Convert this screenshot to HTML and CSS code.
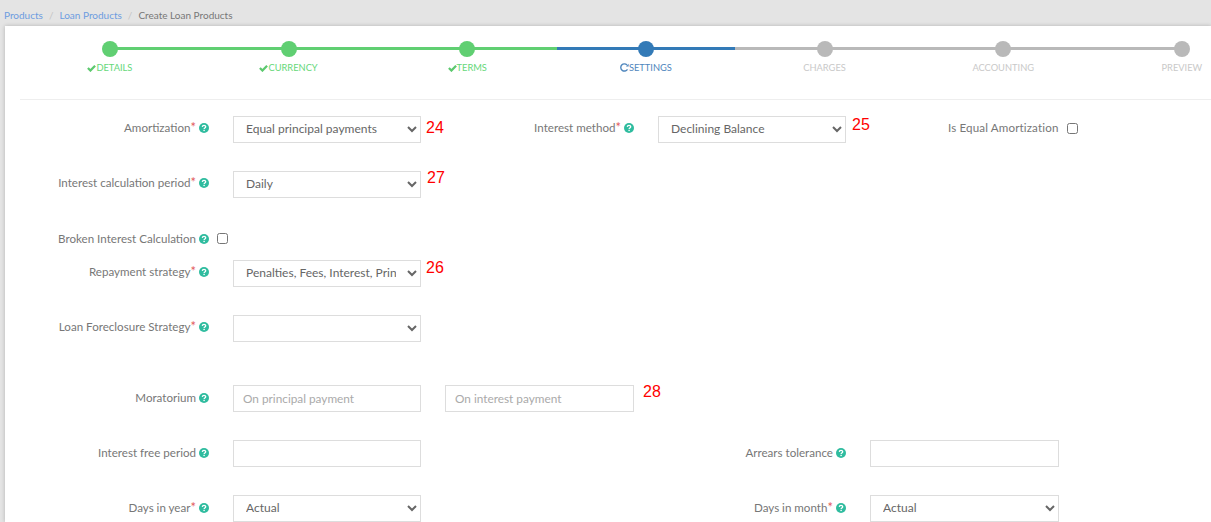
FILE: index.html
```html
<!DOCTYPE html>
<html lang="en">
<head>
<meta charset="utf-8">
<title>Create Loan Products</title>
<link rel="stylesheet" href="styles.css">
</head>
<body>
<svg class="defs" width="0" height="0" aria-hidden="true">
  <symbol id="help" viewBox="0 0 10 10">
    <circle cx="5" cy="5" r="5" fill="#2fbc9f"/>
    <path d="M3.3 3.9C3.4 2.9 4.1 2.4 5 2.4c1 0 1.7.6 1.7 1.4 0 1.3-1.6 1.2-1.6 2.3" fill="none" stroke="#fff" stroke-width="1.3"/>
    <rect x="4.4" y="6.8" width="1.4" height="1.3" fill="#fff"/>
  </symbol>
  <symbol id="ok" viewBox="0 0 10 8">
    <path d="M1 4l2.8 2.8L9 1.4" fill="none" stroke="currentColor" stroke-width="2.5"/>
  </symbol>
  <symbol id="refresh" viewBox="0 0 10 10">
    <path d="M8.3 7A4 4 0 1 1 7.8 2.2" fill="none" stroke="currentColor" stroke-width="1.5"/>
    <path d="M6.6 3.8H9.6V.8z" fill="currentColor"/>
  </symbol>
</svg>

<nav class="crumbs">
  <a href="#">Products</a><span class="sep">/</span><a href="#">Loan Products</a><span class="sep">/</span><span class="current">Create Loan Products</span>
</nav>

<main class="card">
  <ol class="steps">
    <li class="step done"><span class="dot"></span><span class="step-label"><svg class="step-icon ok"><use href="#ok"/></svg>Details</span></li>
    <li class="step done"><span class="dot"></span><span class="step-label"><svg class="step-icon ok"><use href="#ok"/></svg>Currency</span></li>
    <li class="step done"><span class="dot"></span><span class="step-label"><svg class="step-icon ok"><use href="#ok"/></svg>Terms</span></li>
    <li class="step active"><span class="dot"></span><span class="step-label"><svg class="step-icon"><use href="#refresh"/></svg>Settings</span></li>
    <li class="step"><span class="dot"></span><span class="step-label">Charges</span></li>
    <li class="step"><span class="dot"></span><span class="step-label">Accounting</span></li>
    <li class="step"><span class="dot"></span><span class="step-label">Preview</span></li>
  </ol>

  <form class="form">
    <div class="row">
      <label class="lab">Amortization<i>*</i><svg class="help"><use href="#help"/></svg></label>
      <select class="ctl"><option>Equal principal payments</option></select>
      <span class="note n24">24</span>
      <label class="lab">Interest method<i>*</i><svg class="help"><use href="#help"/></svg></label>
      <select class="ctl"><option>Declining Balance</option></select>
      <span class="note n25">25</span>
      <label class="lab lab-equal">Is Equal Amortization</label>
      <input class="check" type="checkbox">
    </div>
    <div class="row">
      <label class="lab">Interest calculation period<i>*</i><svg class="help"><use href="#help"/></svg></label>
      <select class="ctl"><option>Daily</option></select>
      <span class="note n27">27</span>
    </div>
    <div class="row row-short">
      <label class="lab lab-broken">Broken Interest Calculation<svg class="help"><use href="#help"/></svg></label>
      <input class="check check-near" type="checkbox">
    </div>
    <div class="row">
      <label class="lab">Repayment strategy<i>*</i><svg class="help"><use href="#help"/></svg></label>
      <select class="ctl"><option>Penalties, Fees, Interest, Principal order</option></select>
      <span class="note n26">26</span>
    </div>
    <div class="row row-tall">
      <label class="lab">Loan Foreclosure Strategy<i>*</i><svg class="help"><use href="#help"/></svg></label>
      <select class="ctl"><option></option></select>
    </div>
    <div class="row row-low">
      <label class="lab">Moratorium<svg class="help"><use href="#help"/></svg></label>
      <input class="ctl" type="text" placeholder="On principal payment">
      <input class="ctl second" type="text" placeholder="On interest payment">
      <span class="note n28">28</span>
    </div>
    <div class="row row-low">
      <label class="lab">Interest free period<svg class="help"><use href="#help"/></svg></label>
      <input class="ctl" type="text">
      <label class="lab lab-right">Arrears tolerance<svg class="help"><use href="#help"/></svg></label>
      <input class="ctl wide" type="text">
    </div>
    <div class="row row-low">
      <label class="lab">Days in year<i>*</i><svg class="help"><use href="#help"/></svg></label>
      <select class="ctl"><option>Actual</option></select>
      <label class="lab lab-right">Days in month<i>*</i><svg class="help"><use href="#help"/></svg></label>
      <select class="ctl wide"><option>Actual</option></select>
    </div>
  </form>
</main>
</body>
</html>
```

FILE: styles.css
```css
* { box-sizing: border-box; }

html, body {
  margin: 0;
  height: 522px;
  overflow: hidden;
}

body {
  background: #e4e4e4;
  font-family: "Lato", "Open Sans", sans-serif;
  color: #777;
}

.defs { position: absolute; }

.crumbs {
  display: flex;
  align-items: center;
  height: 26px;
  padding: 3px 0 0 4px;
  font-size: 10px;
}
.crumbs a { color: #6d9ce0; text-decoration: none; }
.crumbs .sep { color: #c4c4c4; padding: 0 6px; }
.crumbs .current { color: #777; }

.card {
  margin-left: 5px;
  height: 496px;
  background: #fff;
  box-shadow: 0 0 4px rgba(0, 0, 0, .22);
  overflow: hidden;
}

.steps {
  display: flex;
  list-style: none;
  margin: 0;
  padding: 15px 0 0 15.6px;
  width: 1300px;
}
.step {
  position: relative;
  flex: 0 0 178.67px;
  display: flex;
  flex-direction: column;
  align-items: center;
  --c: #b9b9b9;
  --t: #c9c9c9;
}
.step.done { --c: #60cf72; --t: #66d87a; }
.step.active { --c: #337ab7; --t: #4f86bd; }
.step::before {
  content: "";
  position: absolute;
  top: 6px;
  left: 0;
  right: 0;
  height: 3px;
  background: var(--c);
}
.step:first-child::before { left: 50%; }
.step:last-child::before { right: 50%; }
.dot {
  position: relative;
  width: 16px;
  height: 16px;
  border-radius: 50%;
  background: var(--c);
}
.step-label {
  display: flex;
  align-items: center;
  height: 13px;
  margin-top: 4px;
  font-size: 9.3px;
  line-height: 13px;
  text-transform: uppercase;
  color: var(--t);
  white-space: nowrap;
}
.step-icon { width: 9px; height: 9px; }
.step-icon.ok { color: #5cc96e; height: 8px; }

.form {
  margin: 25px 0 0 15px;
  padding-top: 16px;
  border-top: 1px solid #eee;
}

.row {
  display: flex;
  align-items: flex-start;
  height: 55px;
  font-size: 11px;
}
.row-short { height: 34px; }
.row-tall { height: 70px; }

.lab {
  flex: 0 0 190px;
  display: flex;
  justify-content: flex-end;
  align-items: center;
  height: 23px;
  font-size: 11.6px;
  color: #777;
  white-space: nowrap;
}
.row-low .lab { height: 25px; }
.lab i { font-style: normal; font-size: 13px; line-height: 1; color: #e25b5b; }
.lab-right { flex: 0 0 189px; margin-left: 237px; }
.lab-equal { flex: 0 0 auto; margin-left: 78px; letter-spacing: .14px; }
.lab-broken { height: 25px; }

.help {
  width: 10px;
  height: 10px;
  margin-left: 3px;
  margin-right: 1px;
  flex: none;
}

.ctl {
  flex: 0 0 188px;
  width: 188px;
  height: 27px;
  margin-left: 23px;
  padding: 0 8px 2px;
  border: 1px solid #ddd;
  border-radius: 0;
  background: #fff;
  font-family: inherit;
  font-size: 12px;
  color: #666;
  outline: none;
}
input.ctl { padding: 0 9px; font-size: 11.8px; }
input.ctl::placeholder { color: #aaa; opacity: 1; }
.second { margin-left: 24px; flex-basis: 189px; width: 189px; }
.wide { flex-basis: 189px; width: 189px; }

.check { margin: 7px 0 0 8px; width: 11px; height: 11px; flex: none; }
.check-near { margin-left: 7px; }

.note {
  flex: 0 0 auto;
  width: 16px;
  margin-left: 5px;
  font-family: "Liberation Sans", Arial, sans-serif;
  font-size: 16px;
  line-height: 18px;
  color: #f00;
}
.n24 { margin-top: 3px; width: 19px; }
.n25 { margin-left: 6px; width: 18px; }
.n27 { margin-left: 6px; margin-top: -2px; }
.n26 { margin-top: -1px; }
.n28 { margin-left: 9px; margin-top: -2px; }
```
